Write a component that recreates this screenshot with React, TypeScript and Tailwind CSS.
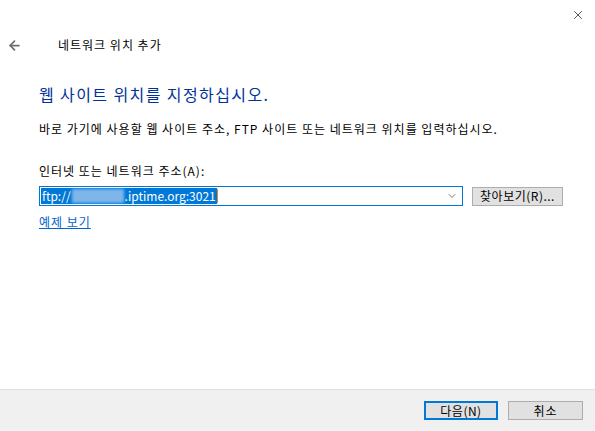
import { ArrowLeft, ChevronDown, X } from "lucide-react";

const font = { fontFamily: '"Noto Sans CJK KR", "Noto Sans", sans-serif' };

export default function App() {
    return (
        <div
            className="w-[595px] h-[431px] bg-white flex flex-col text-[#000] overflow-hidden tracking-[1px]"
            style={font}
        >
            {/* title bar */}
            <div className="h-[30px] flex justify-end items-center pr-[10px]">
                <X className="w-[14px] h-[14px] text-[#222]" strokeWidth={1.3} />
            </div>

            {/* nav row */}
            <div className="h-[30px] flex items-center">
                <ArrowLeft className="w-[15px] h-[15px] ml-[7px] text-[#6e6e6e]" strokeWidth={2.8} />
                <span className="ml-[36px] text-[12px] leading-none">네트워크 위치 추가</span>
            </div>

            <div className="pl-[39px] flex-1 flex flex-col">
                <h1 className="mt-[24px] text-[16px] leading-[20px] text-[#003399] tracking-[1.4px]">
                    웹 사이트 위치를 지정하십시오.
                </h1>
                <p className="mt-[17px] text-[12px] leading-[16px]">
                    바로 가기에 사용할 웹 사이트 주소, FTP 사이트 또는 네트워크 위치를 입력하십시오.
                </p>
                <label className="mt-[26px] text-[12px] leading-[16px]">
                    인터넷 또는 네트워크 주소(A):
                </label>
                <div className="mt-[7px] flex items-center">
                    <div className="w-[424px] h-[20px] border border-[#0078d7] flex items-center pl-[1px] pr-[4px]">
                        <span className="bg-[#0078d7] text-white text-[12px] leading-[16px] px-[1px] flex items-center tracking-normal">
                            ftp://
                            <span className="inline-block w-[52px] h-[14px] bg-[#7fb6ea] blur-[1.5px] mx-[1px]" />
                            .iptime.org:3021
                        </span>
                        <span className="w-[1px] h-[14px] bg-[#f08020]" />
                        <ChevronDown className="ml-auto w-[12px] h-[12px] text-[#555]" strokeWidth={1.5} />
                    </div>
                    <button className="ml-[9px] w-[91px] h-[19px] bg-[#e1e1e1] border border-[#adadad] text-[12px] leading-none tracking-[0.5px]">
                        찾아보기(R)...
                    </button>
                </div>
                <a className="mt-[8px] text-[12px] leading-[16px] text-[#0066cc] underline self-start">
                    예제 보기
                </a>
            </div>

            {/* footer */}
            <div className="h-[42px] bg-[#f0f0f0] border-t border-[#dfdfdf] flex items-center justify-end pr-[12px] gap-[10px]">
                <button className="w-[74px] h-[19px] bg-[#e1e1e1] border-2 border-[#0078d7] text-[12px] leading-none tracking-[0.5px]">
                    다음(N)
                </button>
                <button className="w-[75px] h-[19px] bg-[#e1e1e1] border border-[#adadad] text-[12px] leading-none">
                    취소
                </button>
            </div>
        </div>
    );
}
